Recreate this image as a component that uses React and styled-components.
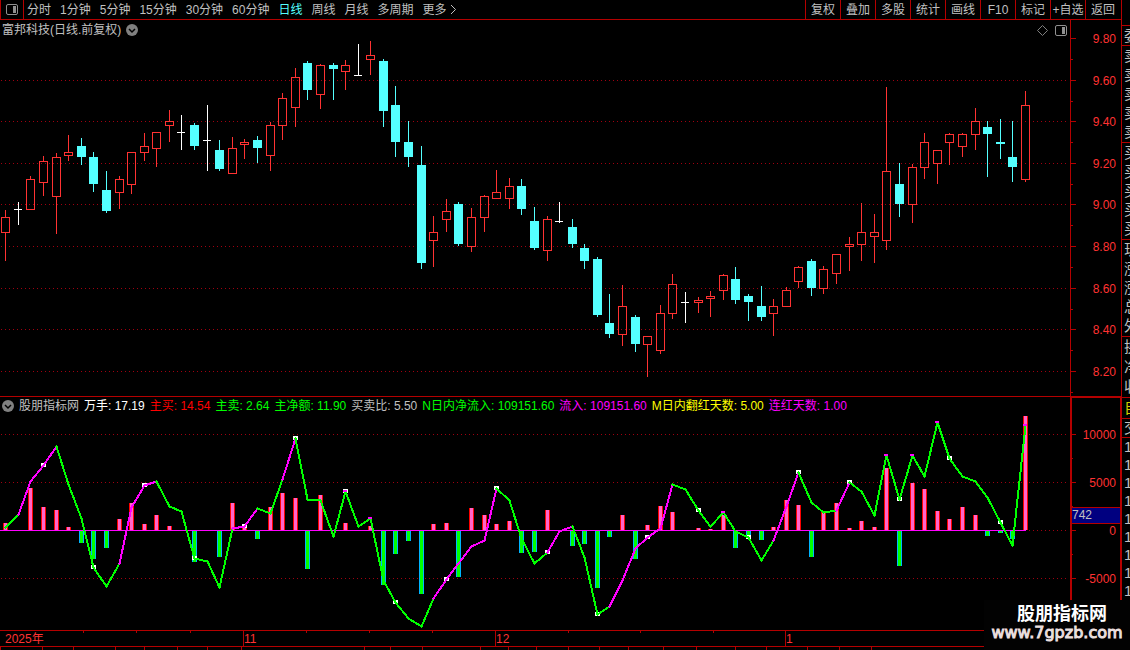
import styled, { createGlobalStyle } from "styled-components";

const RED = "#b40000";
const UP = "#ff3232";
const DOWN = "#54ffff";
const GREY = "#c0c0c0";

const GlobalStyle = createGlobalStyle`
  * {
    box-sizing: border-box;
  }
  body {
    margin: 0;
    background: #000;
    color: ${GREY};
    font-family: "Liberation Sans", "Noto Sans CJK SC", sans-serif;
    font-size: 12px;
    line-height: 18px;
  }
`;

const Screen = styled.div`
  position: relative;
  display: flex;
  height: 100vh;
  overflow: hidden;
`;

const Main = styled.main`
  flex: 1;
  min-width: 0;
  display: flex;
  flex-direction: column;
`;

const Toolbar = styled.nav`
  display: flex;
  height: 20px;
  flex-shrink: 0;
  border-bottom: 1px solid ${RED};
`;

const BarButton = styled.button`
  padding: 0;
  border: none;
  background: none;
  font: inherit;
  white-space: nowrap;
  cursor: pointer;
  color: ${(p) => (p.$active ? DOWN : GREY)};
`;

const LayoutButton = styled(BarButton)`
  display: flex;
  align-items: center;
  justify-content: center;
  width: 24px;
  border-left: 1px solid ${RED};
  border-right: 1px solid ${RED};
`;

const Periods = styled.div`
  display: flex;
  flex: 1;
  gap: 9px;
  padding-left: 3px;
`;

const MoreButton = styled(BarButton)`
  display: flex;
  align-items: center;
  gap: 3px;
`;

const ToolButtons = styled.div`
  display: flex;
  padding-right: 1px;
`;

const ToolButton = styled(BarButton)`
  width: 35px;
  border-left: 1px solid ${RED};
`;

const Pane = styled.section`
  display: flex;
  flex-shrink: 0;
  border-bottom: 1px solid ${RED};
`;

const Plot = styled.div`
  flex: 1;
  min-width: 0;
  svg {
    display: block;
  }
`;

const PlotHeader = styled.div`
  display: flex;
  align-items: center;
  height: ${(p) => p.$height}px;
  gap: 5px;
  padding: 0 3px 0 2px;
  white-space: nowrap;
`;

const Tools = styled.div`
  display: flex;
  align-items: center;
  gap: 7px;
  margin-left: auto;
`;

const Reading = styled.span`
  color: ${(p) => p.$color};
`;

const Axis = styled.div`
  width: 51px;
  border: 0 solid ${RED};
  border-left-width: ${(p) => (p.$framed ? 2 : 1)}px;
  border-right-width: ${(p) => (p.$framed ? 1 : 0)}px;
  border-top-width: ${(p) => (p.$framed ? 1 : 0)}px;
  svg {
    display: block;
  }
`;

const DateAxis = styled.div`
  height: 16px;
  flex-shrink: 0;
  border-bottom: 1px solid ${RED};
  svg {
    display: block;
  }
`;

const TabEdge = styled.div`
  height: 4px;
  svg {
    display: block;
  }
`;

const Side = styled.aside`
  width: 9px;
  overflow: hidden;
  border-left: 1px solid ${RED};
  padding-top: 25px;
  font-size: 15px;
`;

const SideGroup = styled.div`
  display: flex;
  flex-direction: column;
  justify-content: space-around;
  height: ${(p) => p.$height}px;
  padding-left: 2px;
  border-top: 1px solid ${RED};
  line-height: 18px;
  white-space: nowrap;
  color: ${(p) => p.$color || GREY};
`;

const Watermark = styled.div`
  position: absolute;
  right: 0;
  bottom: 0;
  width: 146px;
  height: 50px;
  padding-top: 4px;
  background: #020202;
  color: #fff;
  text-align: center;
  white-space: nowrap;
`;

const SiteName = styled.div`
  font-size: 18px;
  font-weight: 700;
  line-height: 20px;
  padding-left: 10px;
`;

const SiteUrl = styled.div`
  font-family: "DejaVu Sans", sans-serif;
  font-size: 16px;
  line-height: 18px;
  color: #eadfdf;
  -webkit-text-stroke: 1px #eadfdf;
`;

const periods = [
  "分时",
  "1分钟",
  "5分钟",
  "15分钟",
  "30分钟",
  "60分钟",
  "日线",
  "周线",
  "月线",
  "多周期",
];
const tools = ["复权", "叠加", "多股", "统计", "画线", "F10", "标记", "+自选", "返回"];

const readings = [
  ["股朋指标网", GREY],
  ["万手: 17.19", "#ffffff"],
  ["主买: 14.54", "#ff0000"],
  ["主卖: 2.64", "#00ff00"],
  ["主净额: 11.90", "#00ff00"],
  ["买卖比: 5.50", GREY],
  ["N日内净流入: 109151.60", "#00ff00"],
  ["流入: 109151.60", "#ff00ff"],
  ["M日内翻红天数: 5.00", "#ffff00"],
  ["连红天数: 1.00", "#ff00ff"],
];

// kind (r = up, c = down, w = flat), high, body top, body bottom, low
const candles = [
  ["r", 210, 217, 233, 261],
  ["w", 202, 209, 210, 225],
  ["r", 176, 179, 210, 210],
  ["r", 156, 161, 183, 196],
  ["r", 153, 157, 197, 234],
  ["r", 135, 152, 156, 161],
  ["c", 138, 146, 157, 165],
  ["c", 152, 157, 184, 192],
  ["c", 171, 190, 211, 213],
  ["r", 176, 179, 193, 209],
  ["r", 152, 152, 185, 194],
  ["r", 133, 146, 153, 161],
  ["r", 132, 132, 149, 167],
  ["r", 110, 121, 126, 142],
  ["w", 115, 132, 133, 150],
  ["c", 123, 125, 146, 150],
  ["w", 105, 140, 141, 171],
  ["c", 140, 150, 169, 171],
  ["r", 137, 148, 174, 174],
  ["r", 139, 142, 145, 159],
  ["c", 136, 140, 148, 163],
  ["r", 122, 125, 156, 171],
  ["r", 93, 98, 126, 140],
  ["r", 68, 77, 108, 127],
  ["c", 61, 63, 90, 100],
  ["r", 64, 65, 95, 109],
  ["c", 63, 65, 69, 100],
  ["r", 60, 65, 72, 90],
  ["w", 44, 75, 76, 76],
  ["r", 41, 55, 60, 75],
  ["c", 59, 61, 111, 127],
  ["c", 86, 105, 142, 157],
  ["c", 121, 142, 157, 167],
  ["c", 146, 165, 263, 269],
  ["r", 216, 232, 241, 267],
  ["r", 199, 211, 220, 232],
  ["c", 202, 204, 244, 246],
  ["r", 208, 217, 247, 252],
  ["r", 195, 196, 218, 232],
  ["r", 170, 192, 199, 199],
  ["r", 178, 186, 199, 209],
  ["c", 179, 186, 209, 215],
  ["c", 207, 221, 248, 250],
  ["r", 216, 219, 251, 261],
  ["w", 202, 221, 222, 223],
  ["c", 219, 227, 244, 248],
  ["c", 244, 248, 261, 269],
  ["c", 257, 259, 315, 317],
  ["c", 294, 323, 334, 338],
  ["r", 285, 306, 335, 346],
  ["c", 315, 317, 344, 352],
  ["r", 336, 336, 345, 377],
  ["r", 305, 313, 351, 354],
  ["r", 274, 284, 314, 319],
  ["w", 292, 302, 303, 323],
  ["r", 297, 300, 303, 313],
  ["r", 291, 296, 299, 317],
  ["r", 274, 275, 291, 300],
  ["c", 267, 279, 300, 304],
  ["c", 294, 296, 302, 321],
  ["c", 286, 306, 317, 321],
  ["r", 299, 306, 314, 336],
  ["r", 287, 290, 307, 307],
  ["r", 266, 267, 282, 288],
  ["c", 259, 261, 288, 296],
  ["r", 266, 269, 289, 294],
  ["r", 254, 254, 274, 284],
  ["r", 237, 244, 247, 271],
  ["r", 203, 232, 245, 261],
  ["r", 214, 232, 237, 263],
  ["r", 87, 171, 241, 250],
  ["c", 163, 184, 204, 217],
  ["r", 164, 167, 205, 223],
  ["r", 133, 142, 168, 179],
  ["r", 150, 150, 164, 184],
  ["r", 133, 134, 143, 165],
  ["r", 133, 134, 147, 157],
  ["r", 108, 121, 135, 150],
  ["c", 121, 127, 134, 177],
  ["c", 119, 142, 144, 159],
  ["c", 121, 157, 167, 182],
  ["r", 91, 105, 180, 182],
];

// end of each flow bar, measured from the zero line; null = no bar
const ZERO = 530;
const bars = [
  523, null, 488, 507, 510, 527, 543, 559, 548, 519, 503, 524, 515, 526, null,
  562, null, 557, 503, 525, 539, 507, 493, 498, 569, 495, null, 523, null, 526,
  585, 554, 541, 594, 524, 523, 577, 508, 515, 524, 521, 553, 552, 510, null,
  546, 544, 588, 537, 515, 559, 525, 506, 512, null, 528, 529, 515, 548, 536,
  540, 527, 500, 505, 557, 512, 503, 528, 521, 527, 468, 566, 483, 489, 511,
  519, 507, 515, 536, 533, 539, 416,
];

const flow = [
  527, 514, 481, 465, 446, 484, 518, 567, 586, 563, 507, 485, 481, 506, 511,
  558, 561, 587, 528, 526, 508, 513, 479, 438, 499, 500, 536, 491, 526, 518,
  580, 602, 618, 626, 598, 579, 563, 546, 540, 488, 500, 538, 563, 552, 531,
  526, 557, 614, 606, 580, 548, 537, 528, 484, 489, 510, 526, 512, 531, 537,
  560, 540, 506, 472, 502, 512, 510, 482, 491, 515, 455, 499, 455, 476, 422,
  458, 476, 481, 497, 522, 545, 425,
];
// points whose incoming segment is magenta
const rising = [
  2, 3, 4, 10, 11, 12, 19, 20, 23, 35, 36, 37, 38, 39, 44, 45, 49, 50, 51, 52,
  53, 62, 63, 67,
];
const tips = [27, 29, 57, 70, 72, 74, 81];

const priceTicks = [38, 80, 121, 163, 204, 246, 288, 329, 371];
const flowTicks = [434, 482, 530, 578];
const months = [
  [4, "2025年"],
  [243, "11"],
  [495, "12"],
  [785, "1"],
];
const weekTicks = [83, 136, 190, 306, 369, 432, 568, 640, 713];
const tabTicks = [
  0, 42, 73, 115, 144, 177, 207, 241, 364, 390, 422, 480, 508, 536, 568, 599,
  628, 663, 696, 735, 766, 807, 839, 871,
];

const xOf = (i) => Math.floor(5.77 + i * 12.5875);

const Grid = ({ ys }) =>
  ys.map((y) => (
    <line
      key={y}
      x1="1"
      x2="1067"
      y1={y + 0.5}
      y2={y + 0.5}
      stroke="#a00010"
      strokeDasharray="1 3"
    />
  ));

const Candle = ({ x, data }) => {
  const [kind, high, top, bottom, low] = data;
  if (kind === "w") {
    return (
      <g fill="#fff">
        <rect x={x} y={high} width="1" height={low - high} />
        <rect x={x - 4} y={top} width="8" height="1" />
      </g>
    );
  }
  if (kind === "c") {
    return (
      <g fill={DOWN}>
        <rect x={x} y={high} width="1" height={low - high} />
        <rect x={x - 4} y={top} width="9" height={bottom - top} />
      </g>
    );
  }
  return (
    <g fill={UP}>
      <rect x={x} y={high} width="1" height={top - high} />
      <rect x={x} y={bottom} width="1" height={low - bottom} />
      <rect
        x={x - 3.5}
        y={top + 0.5}
        width="8"
        height={bottom - top - 1}
        fill="none"
        stroke={UP}
      />
    </g>
  );
};

const FlowBar = ({ x, end }) => {
  if (end === null) return null;
  const up = end < ZERO;
  const y = up ? end : ZERO;
  const height = Math.abs(end - ZERO);
  return (
    <g>
      <rect x={x - 2} y={y} width="5" height={height} fill={up ? "#ff0000" : "#00b4ff"} />
      <rect x={x - 1} y={y} width="3" height={height} fill={up ? "#ff64c8" : "#00ff00"} />
    </g>
  );
};

const PriceChart = () => (
  <svg
    width="100%"
    height="356"
    viewBox="0 40 1070 356"
    preserveAspectRatio="none"
    shapeRendering="crispEdges"
  >
    <Grid ys={priceTicks.slice(1)} />
    {candles.map((c, i) => (
      <Candle key={i} x={xOf(i)} data={c} />
    ))}
  </svg>
);

const FlowChart = () => (
  <svg
    width="100%"
    height="215"
    viewBox="0 415 1070 215"
    preserveAspectRatio="none"
    shapeRendering="crispEdges"
  >
    <Grid ys={flowTicks} />
    {bars.map((end, i) => (
      <FlowBar key={i} x={xOf(i)} end={end} />
    ))}
    <rect x="0" y={ZERO} width="1026" height="1" fill="#ff00ff" />
    {flow.map((y, i) =>
      i % 4 === 3 ? (
        <rect key={i} x={xOf(i) - 2} y={y - 2} width="5" height="4" fill="#fff" />
      ) : null
    )}
    {flow.slice(1).map((y, i) => (
      <line
        key={i}
        x1={xOf(i) + 0.5}
        y1={flow[i] + 0.5}
        x2={xOf(i + 1) + 0.5}
        y2={y + 0.5}
        strokeWidth="2"
        strokeLinecap="square"
        stroke={rising.includes(i + 1) ? "#ff00ff" : "#00ff00"}
      />
    ))}
    {tips.map((i) => (
      <rect key={i} x={xOf(i) - 2} y={flow[i] - 1} width="4" height="2" fill="#ff00ff" />
    ))}
  </svg>
);

const PriceAxis = () => (
  <svg width="50" height="376" viewBox="1071 20 50 376" shapeRendering="crispEdges">
    {priceTicks.map((y, i) => (
      <g key={y}>
        <rect x="1071" y={y} width="5" height="1" fill={RED} />
        <rect x="1071" y={y + 21} width="2" height="1" fill={RED} />
        <text x="1116" y={y + 5} fontSize="12" fill={UP} textAnchor="end">
          {(9.8 - i * 0.2).toFixed(2)}
        </text>
      </g>
    ))}
  </svg>
);

const FlowAxis = () => (
  <svg width="48" height="232" viewBox="1072 398 48 232" shapeRendering="crispEdges">
    {flowTicks.map((y, i) => (
      <g key={y}>
        <rect x="1072" y={y} width="4" height="1" fill={RED} />
        <rect x="1072" y={y + 24} width="1" height="1" fill={RED} />
        <text x="1116" y={y + 5} fontSize="12" fill={UP} textAnchor="end">
          {10000 - i * 5000}
        </text>
      </g>
    ))}
    <rect x="1072" y="507" width="48" height="17" fill={RED} />
    <rect x="1072" y="508" width="48" height="15" fill="#000080" />
    <text x="1072" y="519" fontSize="12" fill={GREY}>
      742
    </text>
  </svg>
);

const PanelIcon = () => (
  <svg width="12" height="11" viewBox="0 0 12 11">
    <rect x="0.5" y="0.5" width="11" height="10" rx="1.5" fill="none" stroke="#909090" />
    <rect x="7" y="2" width="3" height="7" fill="#909090" />
  </svg>
);

const DiamondIcon = () => (
  <svg width="11" height="11" viewBox="0 0 11 11">
    <path d="M5.5 0.5L10.5 5.5L5.5 10.5L0.5 5.5Z" fill="none" stroke="#808080" />
  </svg>
);

const RoundArrow = () => (
  <svg width="12" height="12" viewBox="0 0 12 12">
    <circle cx="6" cy="6" r="6" fill="#808080" />
    <path d="M3 5L6 8L9 5" fill="none" stroke="#000" strokeWidth="1.5" />
  </svg>
);

const App = () => {
  return (
    <Screen>
      <GlobalStyle />
      <Main>
        <Toolbar>
          <LayoutButton aria-label="layout">
            <PanelIcon />
          </LayoutButton>
          <Periods>
            {periods.map((name) => (
              <BarButton key={name} $active={name === "日线"}>
                {name}
              </BarButton>
            ))}
            <MoreButton>
              更多
              <svg width="7" height="11" viewBox="0 0 7 11">
                <path d="M1 1L5.5 5.5L1 10" fill="none" stroke={GREY} />
              </svg>
            </MoreButton>
          </Periods>
          <ToolButtons>
            {tools.map((name) => (
              <ToolButton key={name}>{name}</ToolButton>
            ))}
          </ToolButtons>
        </Toolbar>
        <Pane>
          <Plot>
            <PlotHeader $height={20}>
              <span>富邦科技(日线.前复权)</span>
              <RoundArrow />
              <Tools>
                <DiamondIcon />
                <PanelIcon />
              </Tools>
            </PlotHeader>
            <PriceChart />
          </Plot>
          <Axis>
            <PriceAxis />
          </Axis>
        </Pane>
        <Pane>
          <Plot>
            <PlotHeader $height={18}>
              <RoundArrow />
              {readings.map(([text, color]) => (
                <Reading key={text} $color={color}>
                  {text}
                </Reading>
              ))}
            </PlotHeader>
            <FlowChart />
          </Plot>
          <Axis $framed>
            <FlowAxis />
          </Axis>
        </Pane>
        <DateAxis>
          <svg
            width="100%"
            height="15"
            viewBox="0 631 1121 15"
            preserveAspectRatio="none"
            shapeRendering="crispEdges"
          >
            {weekTicks.map((x) => (
              <rect key={x} x={x} y="631" width="1" height="2" fill={RED} />
            ))}
            {months.map(([x, label], i) => (
              <g key={label}>
                {i > 0 && <rect x={x} y="631" width="1" height="15" fill={RED} />}
                <text x={x + 1} y="643" fontSize="12" fill={UP}>
                  {label}
                </text>
              </g>
            ))}
          </svg>
        </DateAxis>
        <TabEdge>
          <svg
            width="100%"
            height="3"
            viewBox="0 647 1121 3"
            preserveAspectRatio="none"
            shapeRendering="crispEdges"
          >
            {tabTicks.map((x) => (
              <rect key={x} x={x} y="647" width="1" height="3" fill={RED} />
            ))}
          </svg>
        </TabEdge>
      </Main>
      <Side>
        <SideGroup $height={20}>
          <span>委比</span>
        </SideGroup>
        <SideGroup $height={97}>
          <span>卖五</span>
          <span>卖四</span>
          <span>卖三</span>
          <span>卖二</span>
          <span>卖一</span>
        </SideGroup>
        <SideGroup $height={97}>
          <span>买一</span>
          <span>买二</span>
          <span>买三</span>
          <span>买四</span>
          <span>买五</span>
        </SideGroup>
        <SideGroup $height={97}>
          <span>现价</span>
          <span>涨跌</span>
          <span>涨幅</span>
          <span>总量</span>
          <span>外盘</span>
        </SideGroup>
        <SideGroup $height={61}>
          <span>换手</span>
          <span>净资</span>
          <span>收益</span>
        </SideGroup>
        <SideGroup $height={21} $color="#d0d000">
          <span>自选</span>
        </SideGroup>
        <SideGroup $height={19}>
          <span>交易</span>
        </SideGroup>
        <SideGroup $height={163}>
          <span>14</span>
          <span>14</span>
          <span>14</span>
          <span>14</span>
          <span>14</span>
          <span>14</span>
          <span>14</span>
          <span>14</span>
          <span>14</span>
        </SideGroup>
      </Side>
      <Watermark>
        <SiteName>股朋指标网</SiteName>
        <SiteUrl>www.7gpzb.com</SiteUrl>
      </Watermark>
    </Screen>
  );
};

export default App;
